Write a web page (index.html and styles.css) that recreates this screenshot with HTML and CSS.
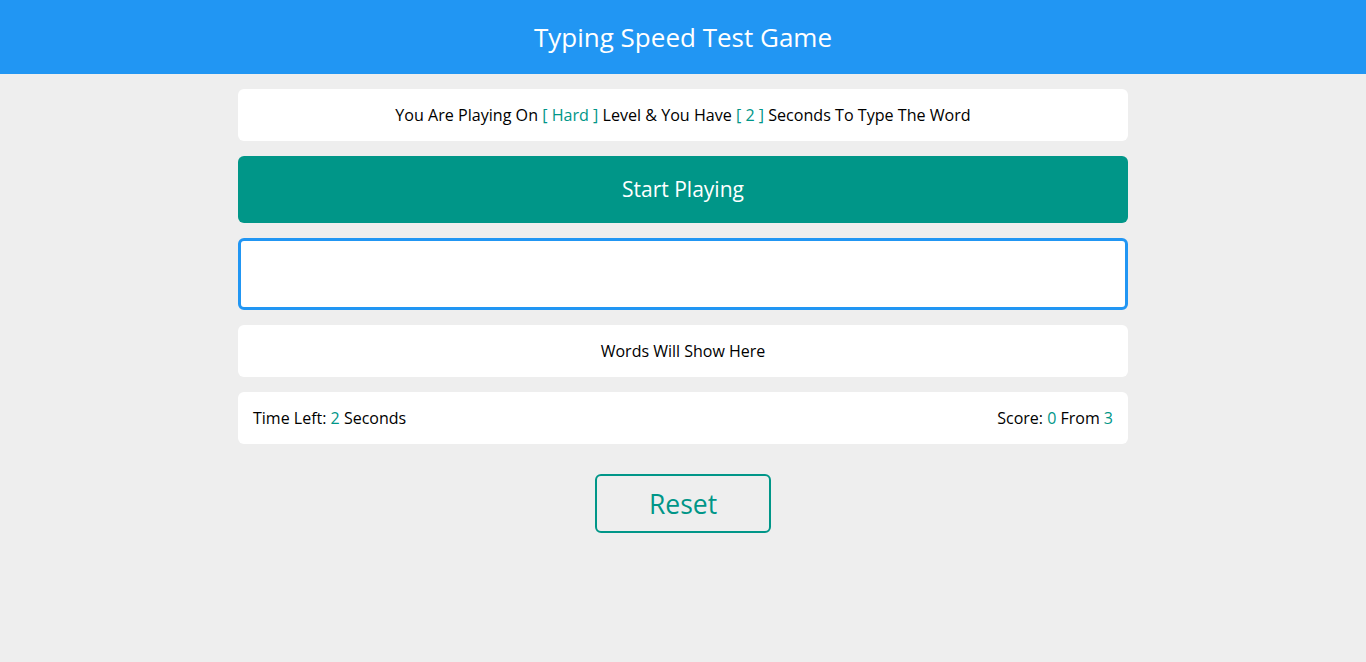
FILE: index.html
```html
<!DOCTYPE html>
<html lang="en">
<head>
<meta charset="utf-8">
<title>Typing Speed Test Game</title>
<link rel="stylesheet" href="styles.css">
</head>
<body>
<header class="header">Typing Speed Test Game</header>
<main class="game">
  <div class="message">You Are Playing On <span class="accent">[ Hard ]</span> Level &amp; You Have <span class="accent">[ 2 ]</span> Seconds To Type The Word</div>
  <div class="start">Start Playing</div>
  <input class="input" type="text" aria-label="Type the word">
  <div class="words">Words Will Show Here</div>
  <div class="control">
    <div>Time Left: <span class="accent">2</span> Seconds</div>
    <div>Score: <span class="accent">0</span> From <span class="accent">3</span></div>
  </div>
  <div class="reset-wrap"><button class="reset" type="button">Reset</button></div>
</main>
</body>
</html>
```
FILE: styles.css
```css
* { box-sizing: border-box; }
html, body { margin: 0; padding: 0; }
body {
  background: #eeeeee;
  font-family: "Open Sans", "Noto Sans", sans-serif;
  color: #000;
}
.header {
  background: #2196f3;
  color: #fff;
  text-align: center;
  font-size: 26px;
  line-height: 36px;
  padding: 19px 0;
  height: 74px;
}
.game {
  width: 890px;
  margin: 15px auto 0;
  display: flex;
  flex-direction: column;
  gap: 15px;
}
.message, .words, .control {
  background: #fff;
  border-radius: 6px;
  font-size: 16px;
  line-height: 22px;
  padding: 15px;
  height: 52px;
  text-align: center;
}
.message { font-size: 16.1px; }
.accent { color: #009688; }
.start {
  background: #009688;
  color: #fff;
  border-radius: 6px;
  font-size: 21px;
  line-height: 27px;
  padding: 20px;
  height: 67px;
  text-align: center;
}
.input {
  display: block;
  width: 100%;
  height: 72px;
  border: 3px solid #2196f3;
  border-radius: 6px;
  background: #fff;
  outline: none;
  font-family: inherit;
  font-size: 20px;
}
.control {
  display: flex;
  justify-content: space-between;
  text-align: left;
}
.reset-wrap {
  display: flex;
  justify-content: center;
  margin-top: 15px;
}
.reset {
  width: 176px;
  height: 59px;
  border: 2px solid #009688;
  border-radius: 6px;
  background: transparent;
  color: #009688;
  font-family: "Open Sans", "Noto Sans", sans-serif;
  font-size: 26.5px;
  line-height: 34px;
  padding: 0;
}
```
